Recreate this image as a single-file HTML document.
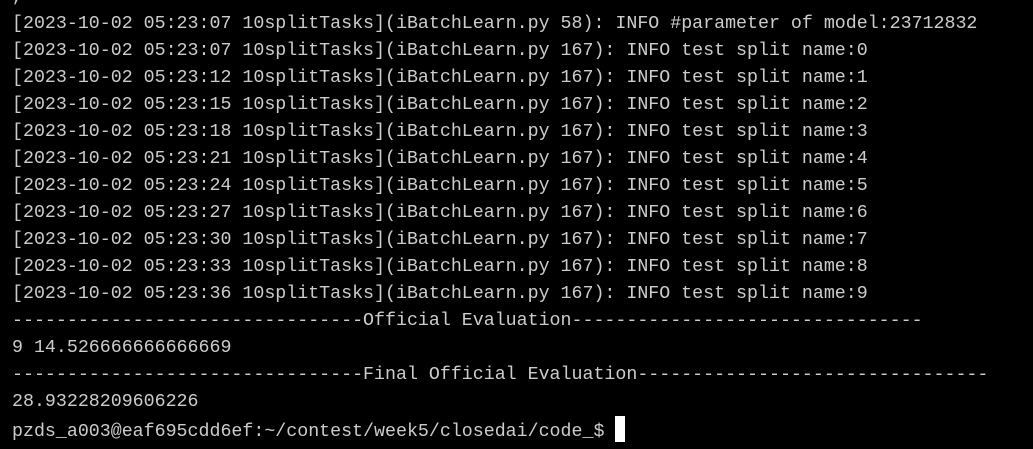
<!DOCTYPE html>
<html><head><meta charset="utf-8"><style>
html,body{margin:0;padding:0;background:#000;width:1033px;height:449px;overflow:hidden}
pre{margin:0;position:absolute;left:12px;top:-16px;font-family:"Liberation Mono",monospace;font-size:18.3px;line-height:27px;color:#cccccc;white-space:pre}
.cur{display:inline-block;width:10px;height:26px;background:#fff;vertical-align:-6px}
</style></head><body><pre>,
[2023-10-02 05:23:07 10splitTasks](iBatchLearn.py 58): INFO #parameter of model:23712832
[2023-10-02 05:23:07 10splitTasks](iBatchLearn.py 167): INFO test split name:0
[2023-10-02 05:23:12 10splitTasks](iBatchLearn.py 167): INFO test split name:1
[2023-10-02 05:23:15 10splitTasks](iBatchLearn.py 167): INFO test split name:2
[2023-10-02 05:23:18 10splitTasks](iBatchLearn.py 167): INFO test split name:3
[2023-10-02 05:23:21 10splitTasks](iBatchLearn.py 167): INFO test split name:4
[2023-10-02 05:23:24 10splitTasks](iBatchLearn.py 167): INFO test split name:5
[2023-10-02 05:23:27 10splitTasks](iBatchLearn.py 167): INFO test split name:6
[2023-10-02 05:23:30 10splitTasks](iBatchLearn.py 167): INFO test split name:7
[2023-10-02 05:23:33 10splitTasks](iBatchLearn.py 167): INFO test split name:8
[2023-10-02 05:23:36 10splitTasks](iBatchLearn.py 167): INFO test split name:9
--------------------------------Official Evaluation--------------------------------
9 14.526666666666669
--------------------------------Final Official Evaluation--------------------------------
28.93228209606226
pzds_a003@eaf695cdd6ef:~/contest/week5/closedai/code_$ <span class="cur"></span></pre></body></html>
